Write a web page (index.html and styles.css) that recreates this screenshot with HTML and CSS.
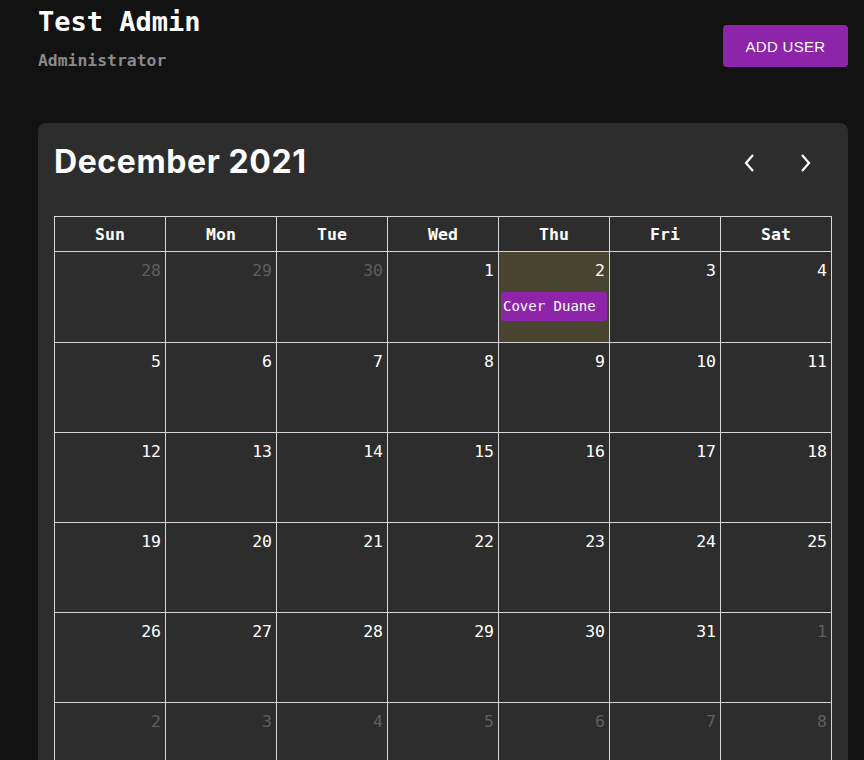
FILE: index.html
```html
<!DOCTYPE html>
<html>
<head>
<meta charset="utf-8">
<link rel="stylesheet" href="styles.css">
</head>
<body>
<div class="page">
  <header class="top">
    <div class="who">
      <h1 class="name">Test Admin</h1>
      <div class="role">Administrator</div>
    </div>
    <button class="add">ADD USER</button>
  </header>
  <section class="card">
    <div class="cal-head">
      <h2 class="month">December 2021</h2>
      <div class="nav">
        <button class="arrow" aria-label="previous"><svg width="14" height="20" viewBox="0 0 14 20"><path d="M10 2 L3 10 L10 18" fill="none" stroke="#fff" stroke-width="2.2"/></svg></button>
        <button class="arrow" aria-label="next"><svg width="14" height="20" viewBox="0 0 14 20"><path d="M4 2 L11 10 L4 18" fill="none" stroke="#fff" stroke-width="2.2"/></svg></button>
      </div>
    </div>
    <table class="grid">
      <thead>
        <tr><th>Sun</th><th>Mon</th><th>Tue</th><th>Wed</th><th>Thu</th><th>Fri</th><th>Sat</th></tr>
      </thead>
      <tbody>
        <tr class="first"><td class="off"><span class="num">28</span></td><td class="off"><span class="num">29</span></td><td class="off"><span class="num">30</span></td><td><span class="num">1</span></td><td class="today"><span class="num">2</span><div class="event">Cover Duane</div></td><td><span class="num">3</span></td><td><span class="num">4</span></td></tr>
        <tr><td><span class="num">5</span></td><td><span class="num">6</span></td><td><span class="num">7</span></td><td><span class="num">8</span></td><td><span class="num">9</span></td><td><span class="num">10</span></td><td><span class="num">11</span></td></tr>
        <tr><td><span class="num">12</span></td><td><span class="num">13</span></td><td><span class="num">14</span></td><td><span class="num">15</span></td><td><span class="num">16</span></td><td><span class="num">17</span></td><td><span class="num">18</span></td></tr>
        <tr><td><span class="num">19</span></td><td><span class="num">20</span></td><td><span class="num">21</span></td><td><span class="num">22</span></td><td><span class="num">23</span></td><td><span class="num">24</span></td><td><span class="num">25</span></td></tr>
        <tr><td><span class="num">26</span></td><td><span class="num">27</span></td><td><span class="num">28</span></td><td><span class="num">29</span></td><td><span class="num">30</span></td><td><span class="num">31</span></td><td class="off"><span class="num">1</span></td></tr>
        <tr><td class="off"><span class="num">2</span></td><td class="off"><span class="num">3</span></td><td class="off"><span class="num">4</span></td><td class="off"><span class="num">5</span></td><td class="off"><span class="num">6</span></td><td class="off"><span class="num">7</span></td><td class="off"><span class="num">8</span></td></tr>
      </tbody>
    </table>
  </section>
</div>
</body>
</html>
```
FILE: styles.css
```css
html, body {
  margin: 0;
  padding: 0;
  background: #121212;
  color: #fff;
  font-family: "DejaVu Sans Mono", monospace;
}
.page {
  padding: 0 16px 0 38px;
}
.top {
  display: flex;
  justify-content: space-between;
  align-items: flex-start;
  height: 123px;
}
.name {
  margin: 0;
  padding-top: 6px;
  font-size: 27px;
  line-height: 32px;
  font-weight: bold;
  color: #fff;
}
.role {
  margin-top: 13px;
  font-size: 16.4px;
  line-height: 20px;
  font-weight: bold;
  color: #8a8a8a;
}
.add {
  margin-top: 25px;
  width: 125px;
  height: 42px;
  border: 0;
  border-radius: 4px;
  background: #8e24aa;
  color: #fff;
  font-family: "Liberation Sans", Arial, sans-serif;
  font-size: 15px;
  letter-spacing: 0.3px;
  padding: 0;
}
.card {
  background: #2d2d2d;
  border-radius: 8px;
  padding: 16px 17px 40px 16px;
}
.cal-head {
  display: flex;
  justify-content: space-between;
  align-items: flex-start;
  height: 77px;
}
.month {
  margin: 0;
  font-family: "Inter", "Liberation Sans", sans-serif;
  font-size: 32px;
  font-weight: 700;
  line-height: 46px;
  margin-top: 0;
  letter-spacing: 0.6px;
}
.nav {
  display: flex;
  gap: 41px;
  margin-right: 19px;
  margin-top: 14px;
}
.arrow {
  background: none;
  border: 0;
  padding: 0;
  width: 14px;
  height: 20px;
  display: block;
}
.arrow svg { display: block; }
.grid {
  border-collapse: collapse;
  width: 778px;
  table-layout: fixed;
}
.grid th, .grid td {
  border: 1px solid #d6d6d6;
}
.grid th {
  height: 34px;
  font-size: 16.5px;
  font-weight: bold;
  text-align: center;
  padding: 0;
  vertical-align: middle;
}
.grid td {
  height: 90px;
  vertical-align: top;
  text-align: right;
  padding: 8px 4px 0 2px;
  box-sizing: border-box;
  font-size: 16.5px;
  line-height: 22px;
}
.grid tr.first td { height: 91px; }
.grid td.off { color: #5f5f5f; }
.grid td.today { background: #49442f; }
.num { display: inline-block; }
.event {
  margin-top: 10px;
  text-align: left;
  background: #8e24aa;
  color: #fff;
  font-size: 14px;
  line-height: 29px;
  height: 29px;
  padding-left: 2px;
  border-radius: 3px;
  margin-right: -2px;
}
```
